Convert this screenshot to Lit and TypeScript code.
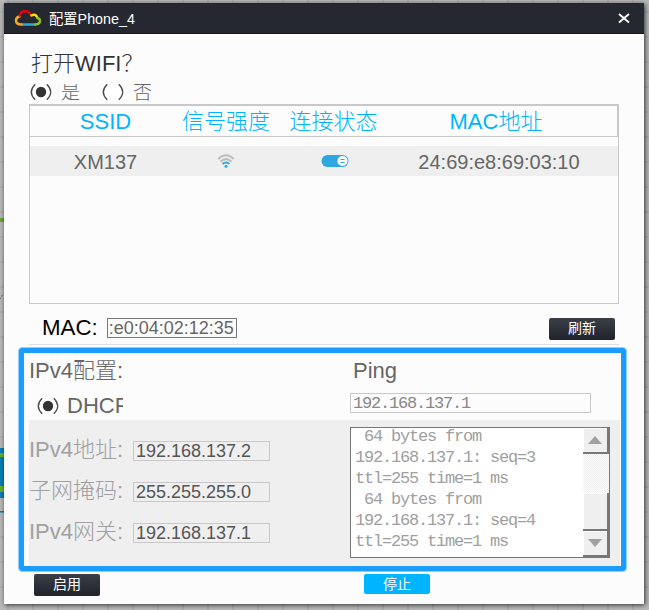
import { LitElement, html, css, svg } from "lit";
import { customElement, property } from "lit/decorators.js";

@customElement("radio-mark")
class RadioMark extends LitElement {
  @property({ type: Boolean }) checked = false;
  static styles = css`
    :host { display: block; width: 22px; height: 16px; flex: none; }
    svg { display: block; }
  `;
  render() {
    return html`<svg width="22" height="16" viewBox="0 0 22 16">
      <path d="M5.2 .2Q-2.6 8 5.2 15.8M16.8 .2Q24.6 8 16.8 15.8" fill="none" stroke="#4a4a4a" stroke-width="1.3" />
      <ellipse cx="11" cy="8" rx="8" ry="8" fill="#fff" />
      ${this.checked ? svg`<circle cx="11" cy="8" r="5.2" fill="#333" />` : ""}
    </svg>`;
  }
}

@customElement("app-root")
class AppRoot extends LitElement {
  private fields = [
    ["IPv4地址:", "192.168.137.2"],
    ["子网掩码:", "255.255.255.0"],
    ["IPv4网关:", "192.168.137.1"],
  ];
  private log = [" 64 bytes from", "192.168.137.1: seq=3", "ttl=255 time=1 ms", " 64 bytes from", "192.168.137.1: seq=4", "ttl=255 time=1 ms"];

  static styles = css`
    :host {
      display: block; position: relative; box-sizing: border-box; width: 649px; height: 610px; padding: 3px 5px 6px 4px; overflow: hidden;
      background-color: #bababa;
      background-image: linear-gradient(90deg, #afafaf 2px, transparent 2px), linear-gradient(#afafaf 2px, transparent 2px);
      background-size: 25px 25px; background-position: 7px 0, 0 11px;
      font-family: "Liberation Sans", "Noto Sans CJK SC", sans-serif; font-weight: 300; color: #666;
    }
    * { box-sizing: border-box; }
    .canvas { position: absolute; left: 0; top: 0; display: block; }
    .dialog { position: relative; width: 640px; height: 601px; background: #fcfcfc; box-shadow: 1px 1px 5px rgba(0,0,0,.75); }
    .title { height: 31px; background: #252830; border-bottom: 1px solid #17191f; display: flex; align-items: center; color: #fff; font-size: 14.3px; font-weight: 400; padding: 0 14px 0 10px; line-height: 30px; }
    .title span { flex: 1; margin-left: 7px; padding-top: 2px; }
    .ask { height: 50px; padding: 14px 0 0 27px; font-size: 22px; line-height: 32px; color: #333; }
    .choice { display: flex; height: 17px; padding-left: 26px; font-size: 19px; line-height: 18px; color: #666; overflow: hidden; }
    .choice span { width: 20px; margin: 0 21px 0 9px; }
    .table { margin: 3px 0 0 25px; width: 590px; height: 200px; border: 1px solid #c8c8c8; }
    .tr { display: grid; grid-template-columns: 151px 90px 125px 206px; text-align: center; align-items: center; }
    .head { height: 32px; border: 1px solid #c8c8c8; border-left: 0; color: #00b4ff; font-size: 22px; line-height: 31px; }
    .head .last { padding-right: 6px; }
    .row { height: 30px; margin-top: 9px; background: #efefef; font-size: 20px; line-height: 32px; }
    .row svg { display: block; margin: 0 auto; position: relative; top: -1px; }
    .row .toggle { left: 1px; }
    .mac { display: flex; align-items: center; margin: 11px 29px 0 38px; height: 26px; color: #000; font-size: 22.3px; }
    .field { width: 137px; height: 20px; border: 1px solid #c8c8c8; font-size: 18px; line-height: 19px; padding-left: 2px; color: #555; white-space: pre; overflow: hidden; }
    .mac .field { width: 130px; border-color: #777; margin: -1px 0 0 9px; padding-left: 1px; color: #666; line-height: 18px; }
    .btn { width: 66px; height: 22px; border-radius: 2px; background: linear-gradient(#3a3e48, #20232b); color: #fff; font-size: 14px; font-weight: 400; line-height: 21px; text-align: center; }
    .mac .btn { margin: 1px 0 0 auto; }
    .line { height: 1px; margin: 3px 25px 0; background: #ddd; }
    .frame { margin: 2px 0 0 14px; width: 609px; height: 225px; border: 1px solid #8fceff; border-radius: 4px; }
    .inner { height: 223px; border: 5px solid #1b9cff; border-radius: 3px; overflow: hidden; padding: 0 1px 0 5px; }
    .top { height: 67px; display: flex; }
    .left { width: 321px; }
    .h { font-size: 22px; line-height: 35px; height: 40px; }
    .dhcp { display: flex; align-items: center; padding-left: 8px; height: 25px; width: 94px; font-size: 22px; overflow: hidden; white-space: nowrap; }
    .dhcp span { margin-left: 8px; }
    .right .h { padding-left: 3px; }
    .mono { font-family: "Liberation Mono", monospace; font-size: 17px; letter-spacing: -1.2px; white-space: pre; }
    .right .field { width: 241px; padding-left: 2px; color: #888; font-size: 17px; line-height: 19px; }
    .body { height: 146px; background: #efefef; display: flex; color: #a0a0a0; }
    .fields { width: 321px; padding-top: 21px; }
    .f { display: flex; height: 41px; align-items: flex-start; font-size: 22px; line-height: 22px; }
    .f label { width: 104px; margin-top: -2px; height: 22px; }
    .log { margin-top: 7px; width: 260px; height: 131px; border: 1px solid #777; background: #fff; display: flex; line-height: 18px; }
    .lines { width: 232px; padding-left: 4px; height: 129px; overflow: hidden; }
    .l { height: 21px; }
    .bar { width: 26px; display: flex; flex-direction: column; background: repeating-conic-gradient(#efefef 0 25%, #fff 0 50%) 0 0 / 2px 2px; }
    .cell { height: 26px; background: #efefef; border: solid #777; border-width: 0 2px 2px 0; box-shadow: inset 1px 1px #fff; display: flex; align-items: center; justify-content: center; }
    .thumb { height: 38px; margin-top: 39px; }
    .foot { display: flex; padding: 2px 0 0 30px; gap: 264px; }
    .stop { height: 20px; background: #00b4ff; line-height: 20px; }
  `;

  render() {
    return html`
      <svg class="canvas" width="6" height="610">
        <rect y="218" width="4" height="4" fill="#65ac35" /><path d="M0 299l3-5" stroke="#666" stroke-dasharray="1.5" />
        <rect y="448" width="4" height="50" fill="#087fbd" /><rect y="453" width="4" height="4" fill="#63b52a" /><rect y="486" width="4" height="6" fill="#63b52a" />
        <rect y="511" width="4" height="1.5" fill="#087fbd" />
      </svg>
      <div class="dialog">
        <div class="title">
          <svg width="28" height="18" viewBox="0 0 28 18" fill="none" stroke-width="2.5" stroke-linecap="round">
            <path d="M8 15.5H20.5" stroke="#26a9e0" /><path d="M7.5 15.5Q2 15.5 2 11.5Q2 8 5.5 7.4" stroke="#f5a81c" />
            <path d="M5.8 6.6Q6.6 2.2 11.2 2.2Q15 2.2 16.2 5" stroke="#e60012" /><path d="M17.4 6.4Q21.8 4.4 23 8.2" stroke="#ffe100" />
            <path d="M23.5 9Q26.2 9.8 26 12.2Q25.6 15.3 21.4 15.5" stroke="#8fc31f" />
          </svg>
          <span>配置Phone_4</span>
          <svg width="12" height="12" viewBox="0 0 12 12"><path d="M1 2l10 8.5M11 2L1 10.5" stroke="#fff" stroke-width="1.9" /></svg>
        </div>
        <div class="ask">打开WIFI？</div>
        <div class="choice"><radio-mark checked></radio-mark><span>是</span><radio-mark></radio-mark><span>否</span></div>
        <div class="table">
          <div class="tr head"><div>SSID</div><div>信号强度</div><div>连接状态</div><div class="last">MAC地址</div></div>
          <div class="tr row">
            <div>XM137</div>
            <div><svg width="18" height="16" viewBox="0 0 18 16" fill="none" stroke-width="2">
              <path d="M1.3 6Q9 -1.6 16.7 6M3.5 8.8Q9 3.5 14.5 8.8" stroke="#bcbcbc" /><path d="M5.6 11Q9 8 12.4 11" stroke="#2ea7e0" /><circle cx="9" cy="13.2" r="1.5" fill="#2ea7e0" />
            </svg></div>
            <div><svg class="toggle" width="28" height="12" viewBox="0 0 28 12"><rect x=".5" width="27" height="12" rx="6" fill="#2ea7e0" /><circle cx="21.5" cy="6" r="5.1" fill="#fff" /><path d="M19.5 4.5h4M19.5 7.5h4" stroke="#2ea7e0" /></svg></div>
            <div>24:69:e8:69:03:10</div>
          </div>
        </div>
        <div class="mac"><span>MAC:</span><div class="field">:e0:04:02:12:35</div><div class="btn">刷新</div></div>
        <div class="line"></div>
        <div class="frame"><div class="inner">
          <div class="top">
            <div class="left"><div class="h">IPv4配置:</div><div class="dhcp"><radio-mark checked></radio-mark><span>DHCP</span></div></div>
            <div class="right"><div class="h">Ping</div><div class="field mono">192.168.137.1</div></div>
          </div>
          <div class="body">
            <div class="fields">${this.fields.map(([k, v]) => html`<div class="f"><label>${k}</label><div class="field">${v}</div></div>`)}</div>
            <div class="log">
              <div class="lines mono">${this.log.map((t) => html`<div class="l">${t}</div>`)}</div>
              <div class="bar">
                <div class="cell"><svg width="14" height="8"><path d="M0 8L7 0l7 8z" fill="#a0a0a0" /></svg></div>
                <div class="cell thumb"></div>
                <div class="cell"><svg width="14" height="8"><path d="M0 0h14L7 8z" fill="#a0a0a0" /></svg></div>
              </div>
            </div>
          </div>
        </div></div>
        <div class="foot"><div class="btn">启用</div><div class="btn stop">停止</div></div>
      </div>`;
  }
}
